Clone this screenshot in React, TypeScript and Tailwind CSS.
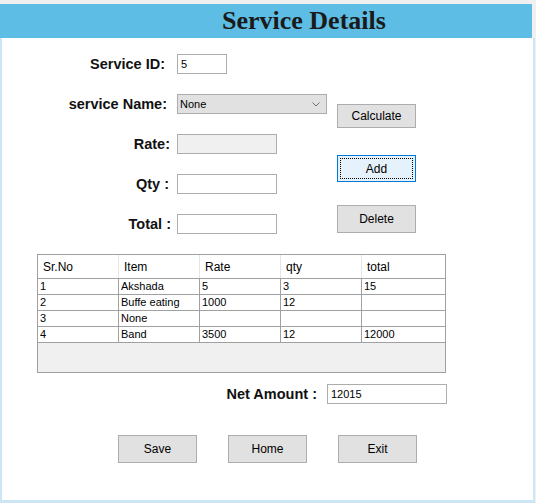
import React from "react";

const sans = "font-['Liberation_Sans',Arial,sans-serif]";

const rows = [
  ["1", "Akshada", "5", "3", "15"],
  ["2", "Buffe eating", "1000", "12", ""],
  ["3", "None", "", "", ""],
  ["4", "Band", "3500", "12", "12000"],
];

const headers = ["Sr.No", "Item", "Rate", "qty", "total"];

function WinButton({ label, h, focused }: { label: string; h: string; focused?: boolean }) {
  if (focused) {
    return (
      <button
        type="button"
        className={`${h} w-[79px] border border-[#0078d7] bg-[#e5f1fb] p-[2px] text-[12px] text-black`}
      >
        <span className="flex h-full w-full items-center justify-center border border-dotted border-black">
          {label}
        </span>
      </button>
    );
  }
  return (
    <button
      type="button"
      className={`${h} w-[79px] border border-[#adadad] bg-[#e1e1e1] text-[12px] text-black`}
    >
      {label}
    </button>
  );
}

function FieldRow({ label, pad, children }: { label: string; pad: string; children: React.ReactNode }) {
  return (
    <div className="flex h-[20px] items-center">
      <div className={`w-[175px] pt-[2px] text-right text-[14.5px] font-bold text-[#111] ${pad}`}>{label}</div>
      {children}
    </div>
  );
}

export default function App() {
  return (
    <div className={`${sans} flex h-[503px] w-[536px] flex-col bg-[#f0f0f0] pt-[4px]`}>
      {/* Title band */}
      <div className="h-[34px] w-[532px] bg-[#5dbde4] pl-[222px]">
        <h1 className="font-['Liberation_Serif','Times_New_Roman',serif] text-[26px] font-bold leading-[34px] text-[#1a1a1a]">
          Service Details
        </h1>
      </div>

      <div className="flex-1 w-[535px] border-b-[3px] border-l-2 border-r-2 border-[#cde6f5] bg-white">
        <div className="flex items-start">
          {/* Form fields */}
          <div className="mt-[16px] flex w-[335px] flex-col gap-[20px]">
            <FieldRow label="Service ID:" pad="pr-[12px]">
              <div className="h-[20px] w-[50px] border border-[#adadad] bg-white pl-[3px] text-[11px] leading-[18px] text-black">
                5
              </div>
            </FieldRow>
            <FieldRow label="service Name:" pad="pr-[10px]">
              <div className="flex h-[20px] w-[150px] items-center justify-between border border-[#adadad] bg-[#e1e1e1] pl-[2px] pr-[6px] text-[11px] text-black">
                <span>None</span>
                <svg width="8" height="5" viewBox="0 0 8 5" fill="none">
                  <polyline points="0.5,0.5 4,4 7.5,0.5" stroke="#707070" strokeWidth="1" />
                </svg>
              </div>
            </FieldRow>
            <FieldRow label="Rate:" pad="pr-[7px]">
              <div className="h-[20px] w-[100px] border border-[#adadad] bg-[#f0f0f0]" />
            </FieldRow>
            <FieldRow label="Qty :" pad="pr-[8px]">
              <div className="h-[20px] w-[100px] border border-[#adadad] bg-white" />
            </FieldRow>
            <FieldRow label="Total :" pad="pr-[6px]">
              <div className="h-[20px] w-[100px] border border-[#adadad] bg-white" />
            </FieldRow>
          </div>

          {/* Action buttons */}
          <div className="flex flex-col pt-[66px]">
            <WinButton label="Calculate" h="h-[24px]" />
            <div className="mt-[27px]">
              <WinButton label="Add" h="h-[27px]" focused />
            </div>
            <div className="mt-[23px]">
              <WinButton label="Delete" h="h-[28px]" />
            </div>
          </div>
        </div>

        {/* Grid */}
        <div className="ml-[35px] mt-[20px] h-[119px] w-[409px] border border-[#a0a0a0] bg-[#f0f0f0]">
          <div className="grid h-[24px] grid-cols-[81px_81px_81px_81px_79px] border-b border-[#a0a0a0] bg-white text-[12px] text-black">
            {headers.map((h, i) => (
              <div
                key={h}
                className={`flex items-center pl-[5px] ${i < 4 ? "border-r border-[#e5e5e5]" : ""}`}
              >
                {h}
              </div>
            ))}
          </div>
          {rows.map((r) => (
            <div
              key={r[0]}
              className="grid h-[16px] grid-cols-[81px_81px_81px_81px_79px] border-b border-[#a0a0a0] bg-white text-[11px] text-black"
            >
              {r.map((c, i) => (
                <div
                  key={i}
                  className={`pl-[2px] leading-[15px] ${i < 4 ? "border-r border-[#a0a0a0]" : ""}`}
                >
                  {c}
                </div>
              ))}
            </div>
          ))}
        </div>

        {/* Net amount */}
        <div className="mt-[11px] flex h-[20px] items-center">
          <div className="w-[315px] pt-[2px] text-right text-[14.5px] font-bold text-[#111]">Net Amount :</div>
          <div className="ml-[10px] h-[20px] w-[120px] border border-[#adadad] bg-white pl-[3px] text-[11px] leading-[18px] text-black">
            12015
          </div>
        </div>

        {/* Bottom buttons */}
        <div className="ml-[116px] mt-[31px] flex gap-[31px]">
          <WinButton label="Save" h="h-[28px]" />
          <WinButton label="Home" h="h-[28px]" />
          <WinButton label="Exit" h="h-[28px]" />
        </div>
      </div>
    </div>
  );
}
